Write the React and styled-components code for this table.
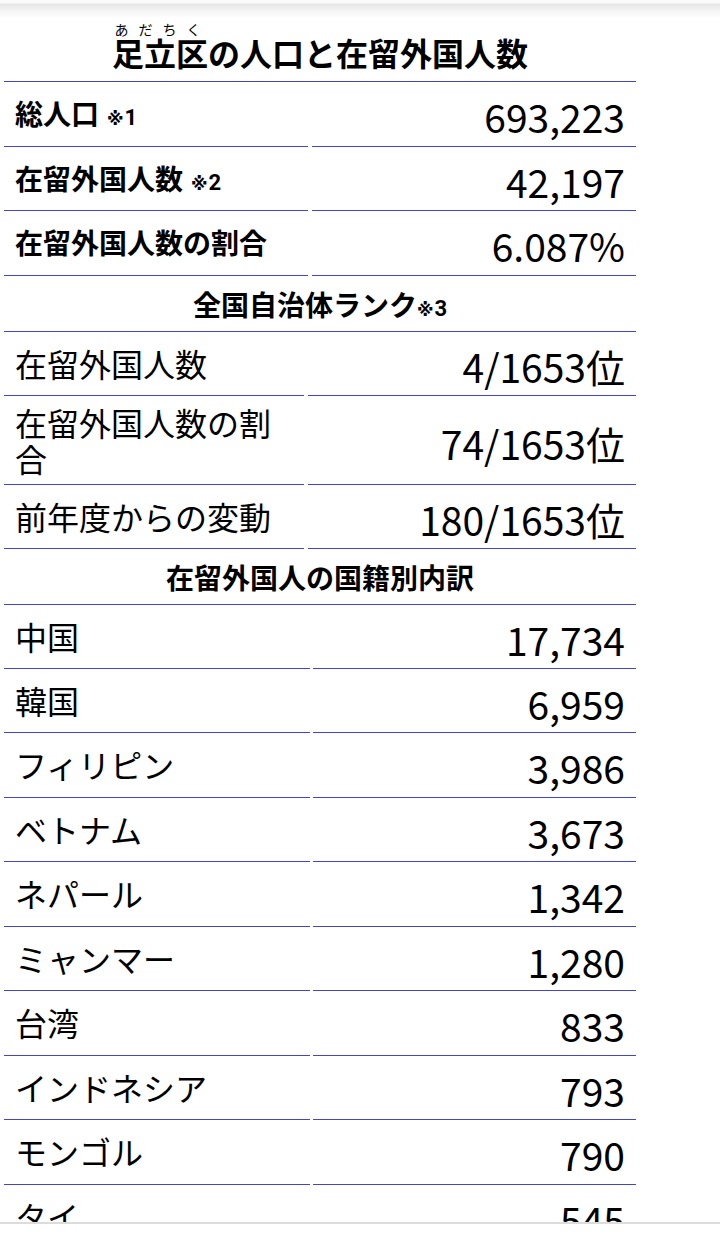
import styled, { createGlobalStyle } from "styled-components";

const GlobalStyle = createGlobalStyle`
  html, body {
    margin: 0;
    padding: 0;
    background: #fff;
  }
  body {
    font-family: "Noto Sans CJK JP", "Noto Sans", sans-serif;
    color: #000;
    height: 1259px;
    overflow: hidden;
  }
`;

const summary = [
  { label: "総人口", note: "1", value: "693,223" },
  { label: "在留外国人数", note: "2", value: "42,197" },
  { label: "在留外国人数の割合", value: "6.087%" },
];

const ranks = [
  { label: "在留外国人数", value: "4/1653位" },
  { label: "在留外国人数の割合", value: "74/1653位" },
  { label: "前年度からの変動", value: "180/1653位" },
];

const nationalities = [
  { label: "中国", value: "17,734" },
  { label: "韓国", value: "6,959" },
  { label: "フィリピン", value: "3,986" },
  { label: "ベトナム", value: "3,673" },
  { label: "ネパール", value: "1,342" },
  { label: "ミャンマー", value: "1,280" },
  { label: "台湾", value: "833" },
  { label: "インドネシア", value: "793" },
  { label: "モンゴル", value: "790" },
  { label: "タイ", value: "545" },
];

const App = () => {
  return (
    <>
      <GlobalStyle />
      <TopShade />
      <Page>
        <Caption>
          <ruby>
            足立区<rt>あだちく</rt>
          </ruby>
          の人口と在留外国人数
        </Caption>

        <Section cols="304px 324px" gap="4px">
          {summary.map((row, i) => (
            <Row key={i}>
              <Label bold tall={i % 2 === 0}>
                <span>
                  {row.label}
                  {row.note && (
                    <Note spaced>
                      <Mark>※</Mark>
                      {row.note}
                    </Note>
                  )}
                </span>
              </Label>
              <Value tall={i % 2 === 0}>{row.value}</Value>
            </Row>
          ))}
          <Heading>
            全国自治体ランク
            <Note>
              <Mark>※</Mark>3
            </Note>
          </Heading>
        </Section>

        <Section cols="300px 328px" gap="4px">
          {ranks.map((row, i) => (
            <Row key={i}>
              <Label>{row.label}</Label>
              <Value>{row.value}</Value>
            </Row>
          ))}
          <Heading>在留外国人の国籍別内訳</Heading>
        </Section>

        <Section cols="306px 323px" gap="3px">
          {nationalities.map((row, i) => {
            const tall = i >= 2 && i % 2 === 0;
            return (
              <Row key={i}>
                <Label tall={tall}>{row.label}</Label>
                <Value tall={tall}>{row.value}</Value>
              </Row>
            );
          })}
        </Section>
      </Page>
      <BottomBar />
    </>
  );
};

const TopShade = styled.div`
  height: 18px;
  background: linear-gradient(
    #fbfbfb 0,
    #fbfbfb 3px,
    #e6e6e6 4px,
    #f3f3f3 10px,
    #ffffff 18px
  );
`;

const Page = styled.div`
  width: 632px;
  margin-left: 4px;
`;

const Caption = styled.div`
  height: 50px;
  padding-bottom: 13px;
  border-bottom: 1px solid #4444d0;
  display: flex;
  align-items: flex-end;
  justify-content: center;
  font-weight: 700;
  font-size: 32px;
  line-height: 32px;

  & rt {
    font-size: 14px;
    font-weight: 400;
    letter-spacing: 5px;
    line-height: 16px;
  }
`;

const Section = styled.div`
  display: grid;
  grid-template-columns: ${(p) => p.cols};
  column-gap: ${(p) => p.gap};
`;

const Row = styled.div`
  display: contents;
`;

const Cell = styled.div`
  border-bottom: 1px solid #4444d0;
  display: flex;
  align-items: center;
`;

const Label = styled(Cell)`
  padding: 9px 11px ${(p) => (p.tall ? "9px" : "8px")} 11px;
  font-size: ${(p) => (p.bold ? "28px" : "32px")};
  font-weight: ${(p) => (p.bold ? 700 : 400)};
  line-height: 35.5px;
`;

const Value = styled(Cell)`
  padding: 11px 11px ${(p) => (p.tall ? "7px" : "6px")} 11px;
  justify-content: flex-end;
  font-size: 39px;
  line-height: 46px;
  white-space: nowrap;
`;

const Note = styled.span`
  font-family: Roboto, "Noto Sans CJK JP", sans-serif;
  font-size: 22px;
  font-weight: 700;
  line-height: 1;
  margin-left: ${(p) => (p.spaced ? "8px" : "0")};
`;

const Mark = styled.span`
  font-family: "DejaVu Sans", "Noto Sans CJK JP", sans-serif;
  font-size: 17px;
  font-weight: 700;
  margin-right: 1px;
`;

const Heading = styled.div`
  grid-column: 1 / -1;
  height: 38px;
  border-bottom: 1px solid #4444d0;
  text-align: center;
  font-weight: 700;
  font-size: 28px;
  line-height: 38px;
  padding: 9px 0 8px;
`;

const BottomBar = styled.div`
  position: fixed;
  left: 0;
  right: 0;
  bottom: 0;
  height: 35px;
  background: #fff;
  border-top: 2px solid #dcdcdc;
`;

export default App;
